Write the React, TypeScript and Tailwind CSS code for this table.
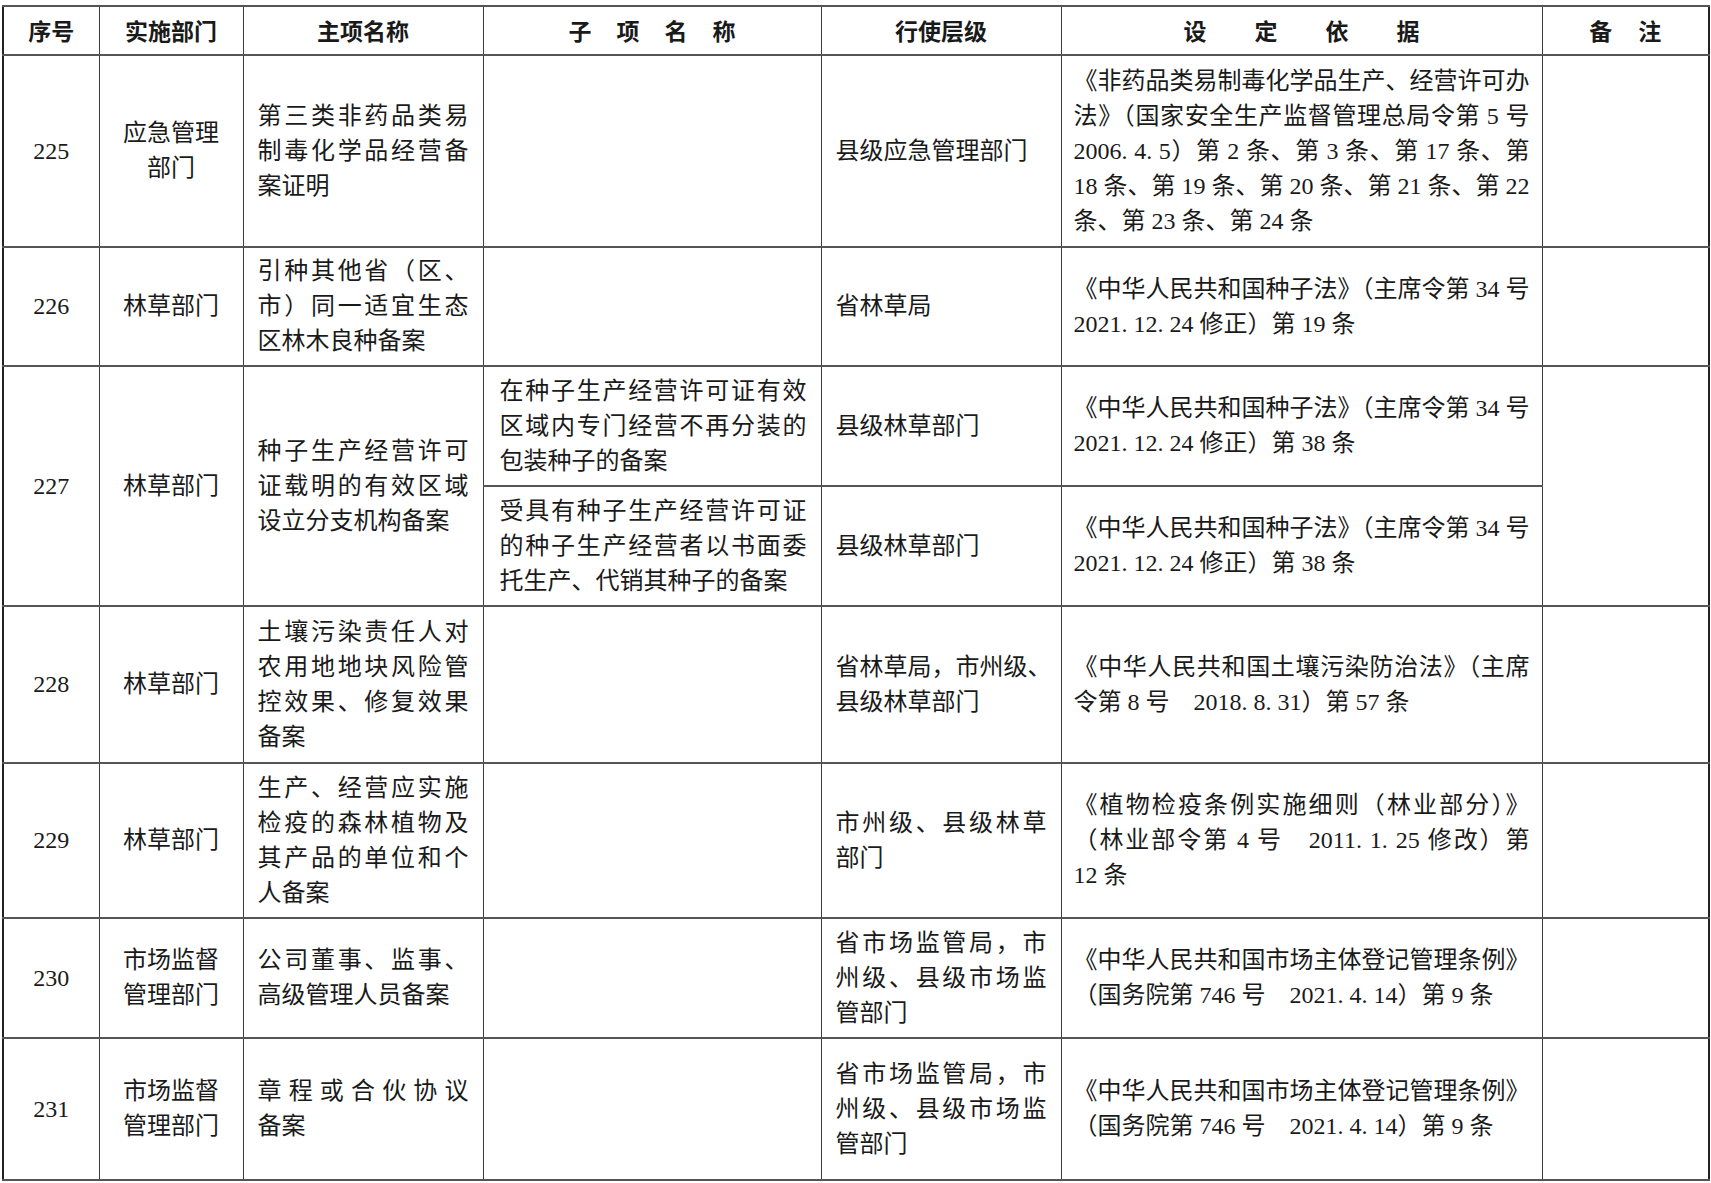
import React from 'react';

type Sub = { sub: string[]; level: string[]; basis: string[] };
type Item = { no: string; dept: string[]; name: string[]; subs: Sub[]; heights: string[] };

const items: Item[] = [
  {
    no: '225',
    dept: ['应急管理', '部门'],
    name: ['第三类非药品类易', '制毒化学品经营备', '案证明'],
    heights: ['h-[192px]'],
    subs: [
      {
        sub: [],
        level: ['县级应急管理部门'],
        basis: [
          '《非药品类易制毒化学品生产、经营许可办',
          '法》（国家安全生产监督管理总局令第 5 号',
          '2006. 4. 5）第 2 条、第 3 条、第 17 条、第',
          '18 条、第 19 条、第 20 条、第 21 条、第 22',
          '条、第 23 条、第 24 条',
        ],
      },
    ],
  },
  {
    no: '226',
    dept: ['林草部门'],
    name: ['引种其他省（区、', '市）同一适宜生态', '区林木良种备案'],
    heights: ['h-[119px]'],
    subs: [
      {
        sub: [],
        level: ['省林草局'],
        basis: ['《中华人民共和国种子法》（主席令第 34 号', '2021. 12. 24 修正）第 19 条'],
      },
    ],
  },
  {
    no: '227',
    dept: ['林草部门'],
    name: ['种子生产经营许可', '证载明的有效区域', '设立分支机构备案'],
    heights: ['h-[120px]', 'h-[120px]'],
    subs: [
      {
        sub: ['在种子生产经营许可证有效', '区域内专门经营不再分装的', '包装种子的备案'],
        level: ['县级林草部门'],
        basis: ['《中华人民共和国种子法》（主席令第 34 号', '2021. 12. 24 修正）第 38 条'],
      },
      {
        sub: ['受具有种子生产经营许可证', '的种子生产经营者以书面委', '托生产、代销其种子的备案'],
        level: ['县级林草部门'],
        basis: ['《中华人民共和国种子法》（主席令第 34 号', '2021. 12. 24 修正）第 38 条'],
      },
    ],
  },
  {
    no: '228',
    dept: ['林草部门'],
    name: ['土壤污染责任人对', '农用地地块风险管', '控效果、修复效果', '备案'],
    heights: ['h-[157px]'],
    subs: [
      {
        sub: [],
        level: ['省林草局，市州级、', '县级林草部门'],
        basis: ['《中华人民共和国土壤污染防治法》（主席', '令第 8 号\u30002018. 8. 31）第 57 条'],
      },
    ],
  },
  {
    no: '229',
    dept: ['林草部门'],
    name: ['生产、经营应实施', '检疫的森林植物及', '其产品的单位和个', '人备案'],
    heights: ['h-[155px]'],
    subs: [
      {
        sub: [],
        level: ['市州级、县级林草', '部门'],
        basis: ['《植物检疫条例实施细则（林业部分）》', '（林业部令第 4 号\u30002011. 1. 25 修改）第', '12 条'],
      },
    ],
  },
  {
    no: '230',
    dept: ['市场监督', '管理部门'],
    name: ['公司董事、监事、', '高级管理人员备案'],
    heights: ['h-[120px]'],
    subs: [
      {
        sub: [],
        level: ['省市场监管局，市', '州级、县级市场监', '管部门'],
        basis: ['《中华人民共和国市场主体登记管理条例》', '（国务院第 746 号\u30002021. 4. 14）第 9 条'],
      },
    ],
  },
  {
    no: '231',
    dept: ['市场监督', '管理部门'],
    name: ['章程或合伙协议', '备案'],
    heights: ['h-[142px]'],
    subs: [
      {
        sub: [],
        level: ['省市场监管局，市', '州级、县级市场监', '管部门'],
        basis: ['《中华人民共和国市场主体登记管理条例》', '（国务院第 746 号\u30002021. 4. 14）第 9 条'],
      },
    ],
  },
];

function Lines({ lines }: { lines: string[] }) {
  return (
    <>
      {lines.map((l, i) => (
        <div
          key={i}
          className={
            i < lines.length - 1
              ? 'whitespace-nowrap text-justify [text-align-last:justify]'
              : 'whitespace-nowrap text-left'
          }
        >
          {l}
        </div>
      ))}
    </>
  );
}

const td = 'border-x border-x-[#3c3c3c] border-y-2 border-y-[#555] align-middle';

function Spaced({ chars, gap }: { chars: string[]; gap: string }) {
  return (
    <div className={`flex justify-center ${gap}`}>
      {chars.map((c) => (
        <span key={c}>{c}</span>
      ))}
    </div>
  );
}

export default function App() {
  return (
    <div className="min-h-screen bg-white pl-[2px] pt-[5px] text-[#1a1a1a]">
      <table className="w-[1706px] table-fixed border-collapse border-2 border-[#222] font-['Liberation_Serif','Noto_Sans_CJK_SC',serif] text-[24px] leading-[35px]">
        <colgroup>
          <col className="w-[96px]" />
          <col className="w-[144px]" />
          <col className="w-[240px]" />
          <col className="w-[338px]" />
          <col className="w-[240px]" />
          <col className="w-[481px]" />
          <col className="w-[167px]" />
        </colgroup>
        <thead>
          <tr className="h-[49px] font-['Noto_Sans_CJK_SC',sans-serif] text-[23px] font-bold">
            <th className={`${td} font-bold`}>序号</th>
            <th className={`${td} font-bold`}>实施部门</th>
            <th className={`${td} font-bold`}>主项名称</th>
            <th className={`${td} font-bold`}>
              <Spaced chars={['子', '项', '名', '称']} gap="gap-[25px]" />
            </th>
            <th className={`${td} font-bold`}>行使层级</th>
            <th className={`${td} font-bold`}>
              <Spaced chars={['设', '定', '依', '据']} gap="gap-[48px]" />
            </th>
            <th className={`${td} font-bold`}>
              <Spaced chars={['备', '注']} gap="gap-[26px]" />
            </th>
          </tr>
        </thead>
        <tbody>
          {items.map((it) =>
            it.subs.map((s, i) => (
              <tr key={it.no + i} className={it.heights[i]}>
                {i === 0 && (
                  <>
                    <td rowSpan={it.subs.length} className={`${td} text-center`}>
                      {it.no}
                    </td>
                    <td rowSpan={it.subs.length} className={`${td} text-center`}>
                      {it.dept.map((d) => (
                        <div key={d}>{d}</div>
                      ))}
                    </td>
                    <td rowSpan={it.subs.length} className={`${td} px-[14px]`}>
                      <Lines lines={it.name} />
                    </td>
                  </>
                )}
                <td className={`${td} pl-[16px] pr-[14px]`}>
                  <Lines lines={s.sub} />
                </td>
                <td className={`${td} px-[14px]`}>
                  <Lines lines={s.level} />
                </td>
                <td className={`${td} px-[12px]`}>
                  <Lines lines={s.basis} />
                </td>
                {i === 0 && <td rowSpan={it.subs.length} className={td}></td>}
              </tr>
            ))
          )}
        </tbody>
      </table>
    </div>
  );
}
